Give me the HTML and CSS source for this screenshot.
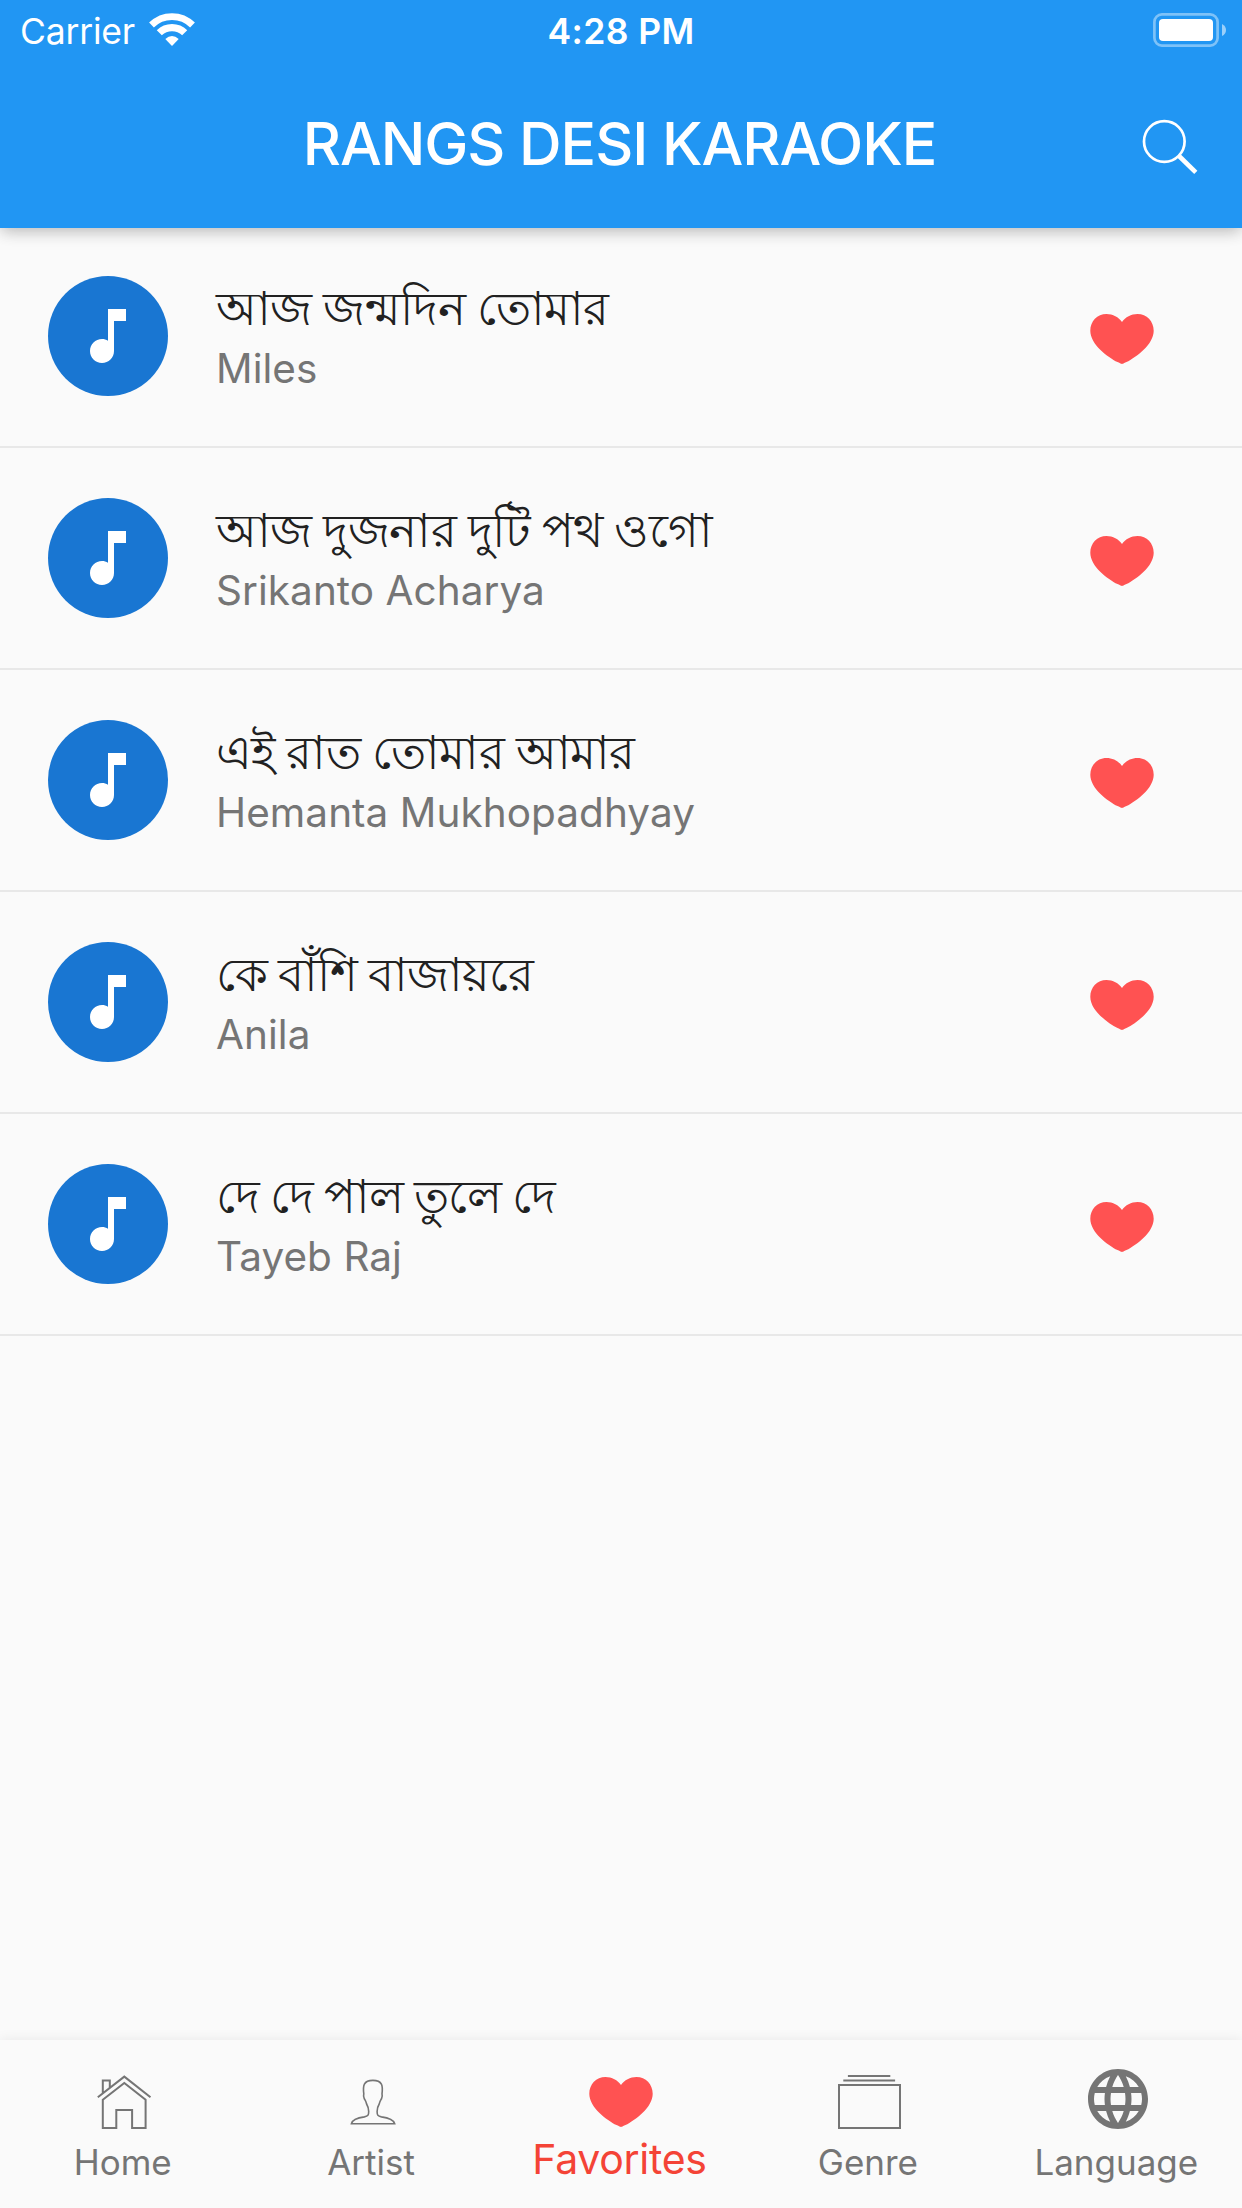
FILE: index.html
```html
<!DOCTYPE html>
<html lang="bn">
<head>
<meta charset="utf-8">
<title>Rangs Desi Karaoke</title>
<link rel="stylesheet" href="styles.css">
</head>
<body>
<svg class="defs" width="0" height="0">
  <symbol id="heart" viewBox="-4 -14 72 72"><path d="M32 8C28.7 3.2 22.8 0 16.5 0 7.2 0 .3 7.4.3 16.7.3 30.5 18 43.200 27.500 48.100 30.200 49.500 31.300 49.900 32 49.900 32.700 49.900 33.800 49.500 36.500 48.100 46 43.200 63.700 30.500 63.700 16.700 63.700 7.400 56.800 0 47.500 0 41.200 0 35.300 3.200 32 8Z"/></symbol>
  <symbol id="note" viewBox="0 0 24 24"><path d="M12 3v10.550c-.59-.34-1.270-.55-2-.55-2.210 0-4 1.790-4 4s1.790 4 4 4 4-1.790 4-4V7h4V3h-6z"/></symbol>
</svg>
<div class="screen">
  <header class="header">
    <div class="status">
      <div class="network"><span class="carrier">Carrier</span>
        <svg class="wifi" viewBox="149 12 46 36"><g fill="none" stroke="#fff"><path stroke-width="6.800" d="M151.500 25A29.100 29.100 0 0 1 192.500 25"/><path stroke-width="7.200" d="M159.300 32.800A18 18 0 0 1 184.700 32.800"/></g><path fill="#fff" d="M165.300 39Q172 32.800 178.700 39L172 46Z"/></svg>
      </div>
      <span class="time">4:28 PM</span>
      <div class="power"><svg class="battery" viewBox="1153 13 74 34"><rect x="1154.400" y="14.400" width="63.200" height="31.200" rx="7.500" fill="none" stroke="#fff" stroke-opacity=".42" stroke-width="2.700"/><rect x="1159" y="19" width="54" height="22" rx="4" fill="#fff"/><path d="M1222 24Q1226 26 1226 30T1222 36Z" fill="#fff" fill-opacity=".55"/></svg></div>
    </div>
    <div class="appbar">
      <h1 class="title">RANGS DESI KARAOKE</h1>
      <svg class="search" viewBox="0 0 56 56"><g fill="none" stroke="#fff"><circle cx="22.300" cy="22.500" r="20.300" stroke-width="2.700"/><path stroke-width="4.600" d="M36.500 36.500 53.800 53.300"/></g></svg>
    </div>
  </header>
  <main class="list">
    <div class="song"><span class="avatar"><svg><use href="#note"/></svg></span><div class="info"><div class="name">আজ জন্মদিন তোমার</div><div class="artist">Miles</div></div><svg class="fav"><use href="#heart"/></svg></div>
    <div class="song"><span class="avatar"><svg><use href="#note"/></svg></span><div class="info"><div class="name">আজ দুজনার দুটি পথ ওগো</div><div class="artist">Srikanto Acharya</div></div><svg class="fav"><use href="#heart"/></svg></div>
    <div class="song"><span class="avatar"><svg><use href="#note"/></svg></span><div class="info"><div class="name">এই রাত তোমার আমার</div><div class="artist">Hemanta Mukhopadhyay</div></div><svg class="fav"><use href="#heart"/></svg></div>
    <div class="song"><span class="avatar"><svg><use href="#note"/></svg></span><div class="info"><div class="name tight">কে বাঁশি বাজায়রে</div><div class="artist">Anila</div></div><svg class="fav"><use href="#heart"/></svg></div>
    <div class="song"><span class="avatar"><svg><use href="#note"/></svg></span><div class="info"><div class="name tight">দে দে পাল তুলে দে</div><div class="artist">Tayeb Raj</div></div><svg class="fav"><use href="#heart"/></svg></div>
  </main>
  <nav class="tabs">
    <a class="tab"><svg viewBox="88.200 43 72 72"><g class="line"><path d="M98 77.300 124.500 56.600 150.700 77.300M103 73.500V60.500H110V67.500"/><path d="M103 79.700 124.500 63 145.800 79.700V108H132.300V90H116.500V108H103Z"/></g></svg><span>Home</span></a>
    <a class="tab"><svg viewBox="336.600 43 72 72"><path class="line thin" d="M351 103.700C352 99.500 358 97.700 364 96.900 367.600 96.200 368.300 95.300 368.300 91.500 368.300 87.500 368 87 366.200 84 365.600 81.300 365 80.600 363.800 78.500 363 76.500 362.900 75.500 363.400 73.800 362.400 66 363 60.400 372.500 60.400S382.600 66 381.600 73.800C382.100 75.500 382 76.500 381.200 78.500 380 80.600 379.400 81.300 378.800 84 377 87 376.700 87.500 376.700 91.500 376.700 95.300 377.400 96.200 381 96.900 387 97.700 393 99.500 394.300 103.700Z"/></svg><span>Artist</span></a>
    <a class="tab active"><svg><use href="#heart"/></svg><span>Favorites</span></a>
    <a class="tab"><svg viewBox="833.400 43 72 72"><path class="line" d="M839.400 65H900.400V108H839.400ZM843.700 60.600H895.500M848.300 56.100H890.700"/></svg><span>Genre</span></a>
    <a class="tab"><svg viewBox="0 0 24 24"><path fill="#757575" d="M11.990 2C6.470 2 2 6.480 2 12s4.470 10 9.990 10C17.520 22 22 17.520 22 12S17.520 2 11.990 2zm6.930 6h-2.950c-.32-1.250-.78-2.450-1.380-3.560 1.840.63 3.370 1.910 4.330 3.560zM12 4.040c.83 1.200 1.480 2.530 1.910 3.960h-3.820c.43-1.430 1.080-2.760 1.910-3.960zM4.260 14C4.100 13.360 4 12.690 4 12s.1-1.360.26-2h3.380c-.08.66-.14 1.320-.14 2 0 .68.06 1.340.14 2H4.260zm.82 2h2.950c.32 1.250.78 2.450 1.380 3.560-1.840-.63-3.370-1.900-4.330-3.560zm2.950-8H5.080c.96-1.660 2.490-2.930 4.330-3.560C8.810 5.550 8.350 6.750 8.030 8zM12 19.960c-.83-1.200-1.480-2.530-1.910-3.960h3.820c-.43 1.430-1.080 2.760-1.910 3.960zM14.340 14H9.660c-.09-.66-.16-1.320-.16-2 0-.68.07-1.350.16-2h4.680c.09.65.16 1.320.16 2 0 .68-.07 1.340-.16 2zm.25 5.560c.6-1.110 1.060-2.310 1.380-3.560h2.950c-.96 1.650-2.490 2.930-4.330 3.560zM16.360 14c.08-.66.14-1.320.14-2 0-.68-.06-1.340-.14-2h3.380c.16.64.26 1.310.26 2s-.1 1.360-.26 2h-3.380z"/></svg><span>Language</span></a>
  </nav>
</div>
</body>
</html>
```
FILE: styles.css
```css
* { box-sizing: border-box; }
body { margin: 0; background: #fafafa; font-family: Inter, "Noto Sans", sans-serif; }
svg { display: block; flex: none; }
.defs { position: absolute; }
.screen { display: flex; flex-direction: column; width: 1242px; height: 2208px; overflow: hidden; background: #fafafa; }

.header { position: relative; z-index: 1; flex: none; height: 228px; background: #2196f3; color: #fff; box-shadow: 0 5px 15px -2px rgba(0,0,0,.18), 0 2px 16px rgba(0,0,0,.12); }
.status { display: grid; grid-template-columns: 1fr auto 1fr; height: 60px; line-height: 63px; }
.network { display: flex; padding-left: 20px; }
.carrier { width: 129px; font-size: 35.5px; letter-spacing: -.2px; white-space: nowrap; }
.wifi { width: 46px; height: 36px; margin-top: 12px; }
.time { font-size: 35.5px; font-weight: 600; letter-spacing: .4px; }
.power { display: flex; justify-content: flex-end; padding: 13px 15px 0 0; }
.battery { width: 74px; height: 34px; }
.appbar { display: grid; grid-template-columns: 1fr auto 1fr; align-items: center; height: 168px; }
.title { grid-column: 2; margin: 0 3px 0 0; font-size: 59px; font-weight: 500; line-height: 72px; letter-spacing: -1.05px; }
.search { width: 56px; height: 56px; margin-right: 44px; justify-self: end; margin-top: 6px; }

.list { flex: 1; min-height: 0; }
.song { display: flex; height: 222px; padding: 48px 84px 0 48px; background: linear-gradient(#e8e8e8, #e8e8e8) 0 218px / 100% 2px no-repeat; }
.avatar { display: grid; place-items: center; width: 120px; height: 120px; border-radius: 50%; background: #1976d2; fill: #fff; }
.avatar svg, .fav { width: 72px; height: 72px; }
.info { flex: 1; padding-left: 48px; }
.name { height: 64px; line-height: 64px; font-size: 47px; letter-spacing: -.6px; word-spacing: -1px; color: #212121; white-space: nowrap; }
.name.tight { letter-spacing: -1.1px; }
.artist { height: 56px; line-height: 57px; font-size: 40.5px; color: #757575; letter-spacing: .05px; }
.fav { margin-top: 24px; fill: #ff5252; }

.tabs { display: grid; grid-template-columns: repeat(5, 1fr); flex: none; height: 168px; background: #fafafa; box-shadow: 0 0 12px rgba(0,0,0,.08); }
.tab { display: flex; flex-direction: column; align-items: center; padding-top: 23px; font-size: 35px; line-height: 54px; color: #757575; }
.tab svg { width: 72px; height: 72px; }
.tab span { margin-right: 3px; }
.tab.active { font-size: 41px; line-height: 49px; letter-spacing: -.3px; color: #f44336; fill: #ff5252; }
.line { fill: none; stroke: #757575; stroke-width: 2; }
.thin { stroke-width: 1.6; }
```
